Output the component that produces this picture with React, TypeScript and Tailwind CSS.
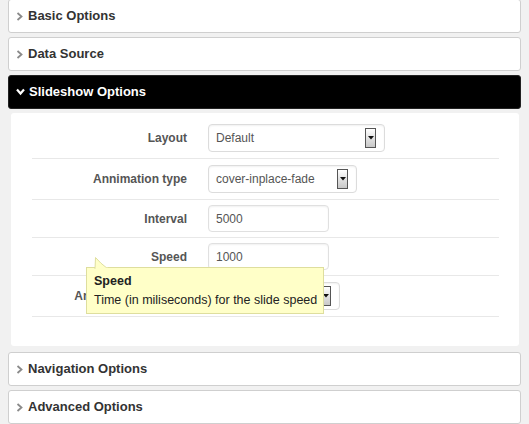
import React from 'react';

const font = { fontFamily: '"Liberation Sans", Arial, sans-serif' };

function Chevron({ open }: { open?: boolean }) {
  if (open) {
    return (
      <svg width="9" height="8" viewBox="0 0 9 8" className="mr-[4px]">
        <path d="M1 1.5 L4.5 5.5 L8 1.5" stroke="#fff" strokeWidth="2.2" fill="none" />
      </svg>
    );
  }
  return (
    <svg width="7" height="9" viewBox="0 0 7 9" className="mr-[5px]">
      <path d="M1.5 1 L5.5 4.5 L1.5 8" stroke="#8a8a8a" strokeWidth="1.8" fill="none" />
    </svg>
  );
}

function Header({ title, open }: { title: string; open?: boolean }) {
  return (
    <div
      className={`h-[34px] rounded-[3px] border flex items-center pl-[7px] text-[13px] font-bold ${
        open ? 'bg-black border-[#222] text-white' : 'bg-white border-[#cfcfcf] text-[#333]'
      }`}
    >
      <Chevron open={open} />
      {title}
    </div>
  );
}

function Select({ value, width }: { value: string; width: string }) {
  return (
    <div
      className={`${width} h-[28px] rounded-[4px] border border-[#dcdcdc] bg-white shadow-[inset_0_1px_2px_rgba(0,0,0,0.06)] flex items-center justify-between pl-[7px] pr-[8px] text-[12px] text-[#555]`}
    >
      <span>{value}</span>
      <div className="w-[11px] h-[20px] border border-[#555] bg-gradient-to-b from-white to-[#c8c8c8] flex items-center justify-center">
        <svg width="6" height="4" viewBox="0 0 6 4">
          <path d="M0 0 H6 L3 3.5 Z" fill="#111" />
        </svg>
      </div>
    </div>
  );
}

function Input({ value }: { value: string }) {
  return (
    <div className="w-[121px] h-[27px] rounded-[4px] border border-[#e0e0e0] bg-white shadow-[inset_0_1px_2px_rgba(0,0,0,0.06)] flex items-center pl-[7px] text-[12px] text-[#555]">
      {value}
    </div>
  );
}

function Row({ label, h, children }: { label: string; h: string; children: React.ReactNode }) {
  return (
    <div className={`${h} flex items-center border-b border-[#e8e8e8]`}>
      <div className="w-[155px] text-right text-[12px] font-bold text-[#555]">{label}</div>
      <div className="ml-[21px]">{children}</div>
    </div>
  );
}

export default function App() {
  return (
    <div style={font} className="relative w-[529px] h-[424px] overflow-hidden bg-[#f1f1f1]">
      <div className="px-[8px] mt-[-1px] flex flex-col">
        <Header title="Basic Options" />
        <div className="mt-[4px]">
          <Header title="Data Source" />
        </div>
        <div className="mt-[4px]">
          <Header title="Slideshow Options" open />
        </div>
        <div className="mt-[4px] ml-[3px] mr-[2px] h-[233px] bg-white rounded-[3px] pt-[5px] pl-[21px] pr-[20px]">
          <Row label="Layout" h="h-[41px]">
            <Select value="Default" width="w-[177px]" />
          </Row>
          <Row label="Annimation type" h="h-[41px]">
            <Select value="cover-inplace-fade" width="w-[149px]" />
          </Row>
          <Row label="Interval" h="h-[38px]">
            <Input value="5000" />
          </Row>
          <Row label="Speed" h="h-[38px]">
            <Input value="1000" />
          </Row>
          <Row label="Animation direction" h="h-[41px]">
            <Select value="horizontal" width="w-[132px]" />
          </Row>
        </div>
        <div className="mt-[6px]">
          <Header title="Navigation Options" />
        </div>
        <div className="mt-[4px]">
          <Header title="Advanced Options" />
        </div>
      </div>

      <div className="absolute left-[86px] top-[267px] w-[238px] h-[47px] bg-[#ffffc8] border border-[#dede9e] text-[#222] text-[12.5px] pl-[7px] pt-[5px]">
        <svg width="16" height="12" viewBox="0 0 16 12" className="absolute left-[7px] top-[-11px]">
          <path d="M1 12 L1.5 0.5 Q6 6 14 12 Z" fill="#ffffc8" stroke="#dede9e" strokeWidth="1" />
          <path d="M1.5 11.5 H14" stroke="#ffffc8" strokeWidth="1.5" />
        </svg>
        <div className="font-bold leading-[16px]">Speed</div>
        <div className="leading-[16px] mt-[3px]">Time (in miliseconds) for the slide speed</div>
      </div>
    </div>
  );
}
